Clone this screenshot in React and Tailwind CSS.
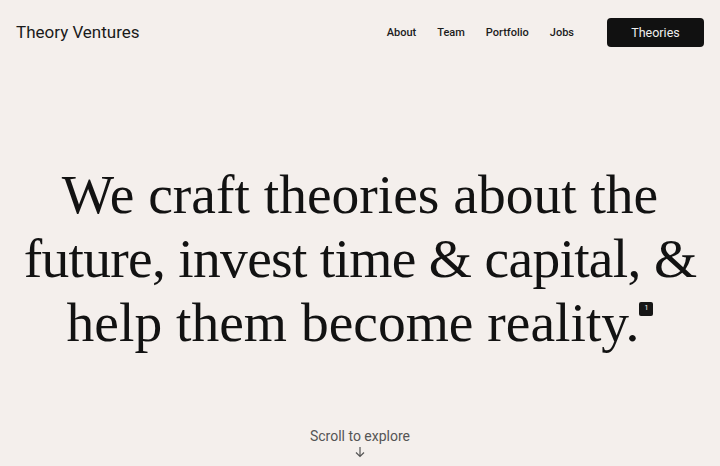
export default function App() {
  return (
    <div className="flex h-[466px] flex-col overflow-hidden bg-[#f4efec] text-[#111] font-['Roboto',sans-serif]">
      <header className="flex items-center justify-between pl-4 pr-4 pt-[18px]">
        <h1 className="text-[17px] leading-[29px] text-[#1a1a1a]">Theory Ventures</h1>
        <nav className="flex items-center">
          <div className="mr-[33px] flex gap-[21px] pt-[2px] text-[11px] font-medium text-[#1c1c1c]">
            <a href="#">About</a>
            <a href="#">Team</a>
            <a href="#">Portfolio</a>
            <a href="#">Jobs</a>
          </div>
          <a href="#" className="flex h-[29px] w-[97px] items-center justify-center rounded-[4px] bg-[#111] pt-[1px] text-[12.5px] text-[#eee]">
            Theories
          </a>
        </nav>
      </header>

      <main className="mt-[116px] flex flex-col items-center">
        <p className="whitespace-nowrap text-center font-['Liberation_Serif',serif] text-[55.5px] leading-[64px] text-[#121212]">
          We craft theories about the
          <br />
          <span className="tracking-[-0.7px]">future, invest time &amp; capital, &amp;</span>
          <br />
          help them become reality.
          <sup className="relative -top-[31px] inline-flex h-[14px] w-[14px] items-center justify-center rounded-[2px] bg-[#161616] align-baseline font-['Roboto',sans-serif] text-[7px] leading-none text-white">
            1
          </sup>
        </p>
      </main>

      <div className="mt-auto mb-[8px] flex flex-col items-center text-[#555]">
        <span className="text-[14px] leading-[18px]">Scroll to explore</span>
        <svg width="12" height="12" viewBox="0 0 12 12" fill="none" stroke="currentColor" strokeWidth="1.2" className="mt-[1px]">
          <path d="M6 1v9.5M2 6.5l4 4 4-4" />
        </svg>
      </div>
    </div>
  );
}
